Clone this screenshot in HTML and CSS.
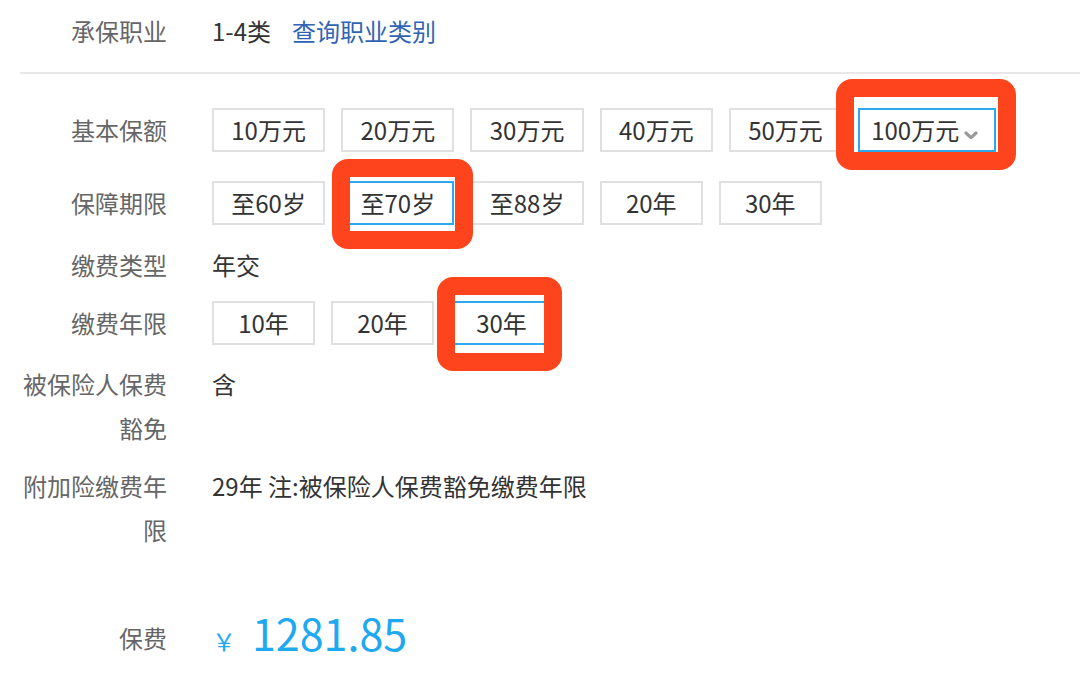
FILE: index.html
```html
<!DOCTYPE html>
<html lang="zh-CN">
<head>
<meta charset="utf-8">
<title>投保信息</title>
<link rel="stylesheet" href="styles.css">
</head>
<body>
<div class="page">
  <div class="row">
    <div class="label">承保职业</div>
    <div class="value">1-4类<a class="link">查询职业类别</a></div>
  </div>

  <div class="divider"></div>

  <div class="row">
    <div class="label">基本保额</div>
    <div class="options">
      <span class="opt">10万元</span>
      <span class="opt">20万元</span>
      <span class="opt">30万元</span>
      <span class="opt">40万元</span>
      <span class="opt">50万元</span>
      <span class="opt selected dropdown">100万元<svg class="chev" width="14" height="9" viewBox="0 0 14 9"><path d="M2 2 L7 6.6 L12 2" fill="none" stroke="#9a9a9a" stroke-width="3.2" stroke-linecap="round" stroke-linejoin="round"/></svg><span class="mark mark-amount"></span></span>
    </div>
  </div>

  <div class="row mt-29">
    <div class="label">保障期限</div>
    <div class="options">
      <span class="opt">至60岁</span>
      <span class="opt selected">至70岁<span class="mark mark-term"></span></span>
      <span class="opt">至88岁</span>
      <span class="opt">20年</span>
      <span class="opt">30年</span>
    </div>
  </div>

  <div class="row mt-18">
    <div class="label">缴费类型</div>
    <div class="value">年交</div>
  </div>

  <div class="row mt-14">
    <div class="label">缴费年限</div>
    <div class="options">
      <span class="opt">10年</span>
      <span class="opt">20年</span>
      <span class="opt selected">30年<span class="mark mark-years"></span></span>
    </div>
  </div>

  <div class="row mt-17">
    <div class="label">被保险人保费豁免</div>
    <div class="value">含</div>
  </div>

  <div class="row mt-14">
    <div class="label">附加险缴费年限</div>
    <div class="value">29年 注:被保险人保费豁免缴费年限</div>
  </div>

  <div class="row mt-64">
    <div class="label">保费</div>
    <div class="price"><span class="yen">￥</span>1281.85</div>
  </div>
</div>
</body>
</html>
```

FILE: styles.css
```css
html, body {
  margin: 0;
  padding: 0;
  background: #ffffff;
}

body {
  font-family: "Noto Sans CJK SC", "Noto Sans", sans-serif;
  font-size: 24px;
  color: #333333;
}

.page {
  padding: 9px 0 0 20px;
}

.row {
  display: flex;
  align-items: flex-start;
  column-gap: 45px;
}

.label {
  flex: none;
  width: 147px;
  text-align: right;
  line-height: 44px;
  color: #666666;
}

.value {
  line-height: 44px;
  color: #333333;
}

.link {
  margin-left: 21px;
  color: #3163b5;
  text-decoration: none;
}

.divider {
  height: 2px;
  background: #e8e8e8;
  margin: 19px 0 34px;
}

.options {
  display: flex;
  column-gap: 16px;
}

.opt {
  position: relative;
  box-sizing: border-box;
  display: flex;
  align-items: center;
  justify-content: center;
  height: 44px;
  min-width: 103px;
  padding: 0 17.3px;
  border: 2px solid #e0e0e0;
  color: #333333;
  line-height: 40px;
  white-space: nowrap;
}

.opt.selected {
  border-color: #2ea8ec;
}

.opt.dropdown {
  padding: 0 16px 0 11px;
}

.chev {
  flex: none;
  margin-left: 5px;
  margin-top: 10px;
}

.mark {
  position: absolute;
  z-index: 2;
  border: 18px solid #fe441d;
  border-radius: 16px;
  pointer-events: none;
}

.mark-amount {
  left: -24px;
  right: -22px;
  top: -31px;
  bottom: -20px;
}

.mark-term {
  left: -11px;
  right: -21px;
  top: -24px;
  bottom: -26px;
}

.mark-years {
  left: -15px;
  right: -11px;
  top: -26px;
  bottom: -28px;
}

.mt-14 { margin-top: 14px; }
.mt-17 { margin-top: 17px; }
.mt-18 { margin-top: 18px; }
.mt-29 { margin-top: 29px; }
.mt-64 { margin-top: 64px; }

.price {
  color: #1fa9f1;
  font-size: 43px;
  line-height: 33px;
  white-space: nowrap;
}

.yen {
  font-size: 24px;
  margin-right: 16px;
}
```
